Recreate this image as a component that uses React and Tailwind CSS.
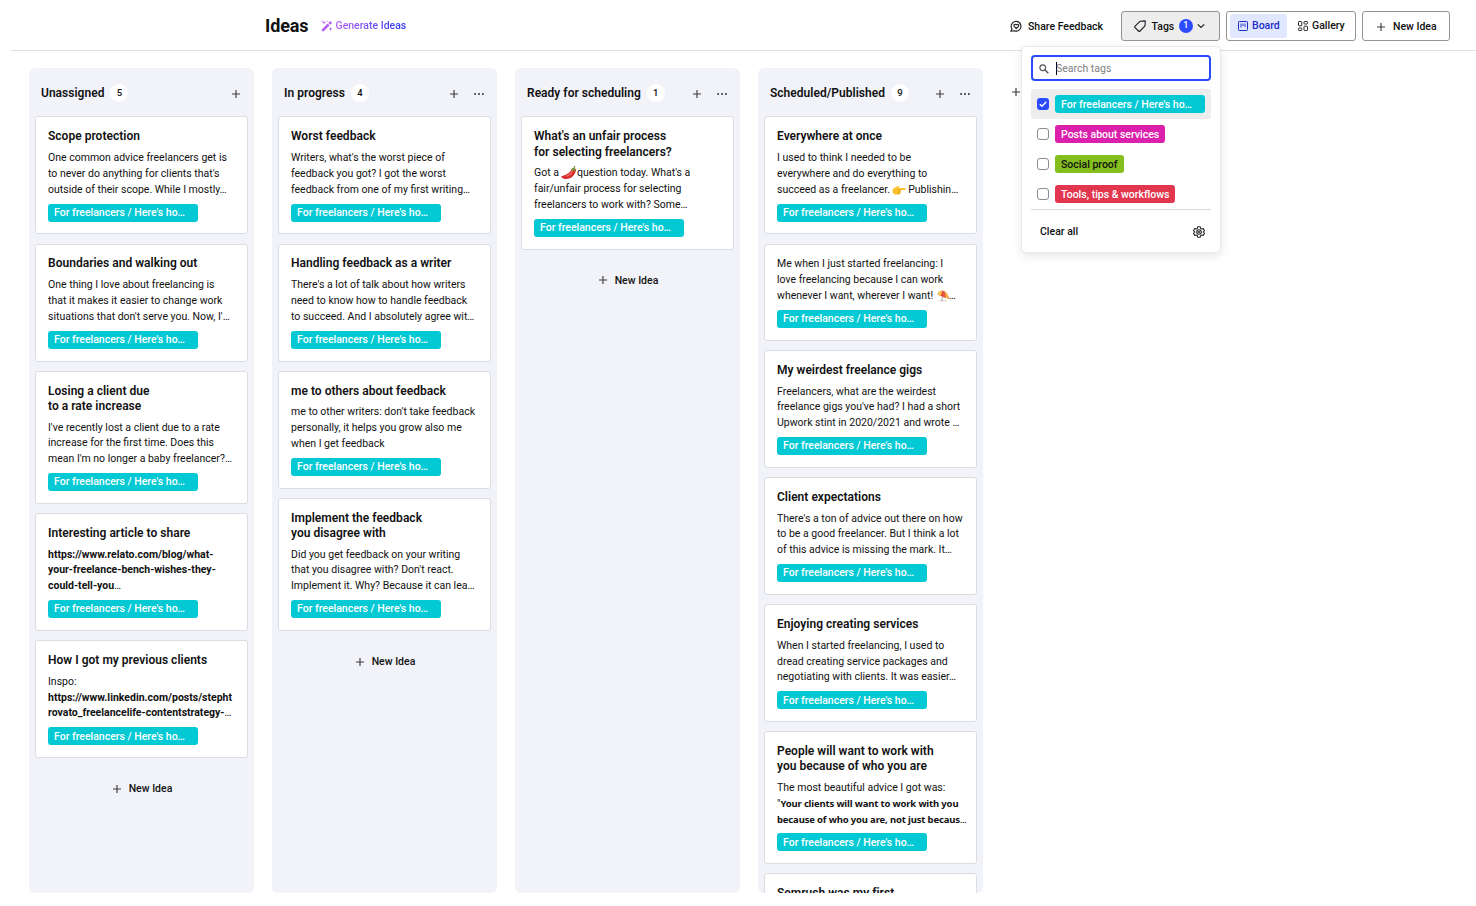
import React from "react";

const TAG = "For freelancers / Here's ho…";

const Chili = () => (
  <svg viewBox="0 0 14 14" className="-ml-px -mr-px inline-block h-[15px] w-[15px] align-[-4px]">
    <path d="M10.400 3C9.200 6.500 5.600 9.200.6 10.400c-.5.500-.3 1.100.3 1.500 2.900 1.900 7.300 1.300 10.200-1.500 2.200-2.100 3.100-4.700 2.700-7Z" fill="#d92b2b" />
    <path d="M10.800 5.300C9.800 7.800 7.400 9.700 4.700 10.600" stroke="#f77f72" strokeWidth="1" fill="none" />
    <path d="M9.500 4.600c.2-1.700 2.900-2.200 4.200-.4l-.1 1.500-1.500-.7-1.300.6Z" fill="#6b9a34" />
    <path d="M12 3.400c.1-1 .4-1.700 1.200-2.400" stroke="#6b9a34" strokeWidth="1.100" fill="none" />
  </svg>
);

const Pointing = () => (
  <svg viewBox="0 0 14 12" className="-ml-px inline-block h-[12px] w-[14px] align-[-3px]">
    <path d="M.5 6.500C1 4.500 2.500 3.500 4.200 2.900l2-1c1-.3 1.500.6.8 1.300l-.8.8h6.600c1.200 0 1.200 1.900 0 1.900H8.600c.8.5.8 1.500 0 1.800.5.600.2 1.500-.5 1.600 0 .9-.6 1.300-1.400 1.300H3.200C1.700 10.600.3 8.600.5 6.500Z" fill="#fcc12d" />
    <path d="M5.800 6h2.800M5.800 7.800h2.600M5.600 9.400h2.300" stroke="#dc8d18" strokeWidth=".5" />
  </svg>
);

const Umbrella = () => (
  <svg viewBox="0 0 13 13" className="-mr-px inline-block h-[13px] w-[14px] align-[-3px]">
    <path d="M2 12.200c2-1.500 7-1.500 9 0Z" fill="#d5cfc4" />
    <path d="M7 6 5 12" stroke="#9aa0a8" strokeWidth=".8" />
    <path d="M1 5.500C3 .3 9.500-.5 12.600 9.800 9 9 4.500 7 1 5.500Z" fill="#e23b3b" />
    <path d="M1 5.500C2 3 4 1.700 6 1.600L4.300 7Z" fill="#f6c54a" />
    <path d="M6 1.600C8.500 2.600 9.300 5.500 9 8.800L6.600 7.900Z" fill="#ee5a45" />
    <path d="M9 8.800c.2-2.500-.2-4.800-1.400-6.900 2.500 1 4.300 3.800 5 7.900Z" fill="#f3b548" />
  </svg>
);

const Plus = () => (
  <svg viewBox="0 0 10 10" className="h-[10px] w-[10px] shrink-0">
    <path d="M5 1v8M1 5h8" stroke="#3d3d3d" strokeWidth="1.150" fill="none" />
  </svg>
);

const B = ({ children }) => <b className="font-bold">{children}</b>;
const M = ({ children }) => (
  <b className="font-['Noto_Sans',sans-serif] text-[9.500px] font-bold tracking-[-0.16px]">{children}</b>
);

const columns = [
  {
    name: "Unassigned",
    count: 5,
    cards: [
      { title: ["Scope protection"], body: ["One common advice freelancers get is", "to never do anything for clients that's", "outside of their scope. While I mostly…"] },
      { title: ["Boundaries and walking out"], body: ["One thing I love about freelancing is", "that it makes it easier to change work", "situations that don't serve you. Now, I'…"] },
      { title: ["Losing a client due", "to a rate increase"], body: ["I've recently lost a client due to a rate", "increase for the first time. Does this", "mean I'm no longer a baby freelancer?…"] },
      {
        title: ["Interesting article to share"],
        body: [<B>https://www.relato.com/blog/what-</B>, <B>your-freelance-bench-wishes-they-</B>, <><B>could-tell-you</B>…</>],
      },
      {
        title: ["How I got my previous clients"],
        body: ["Inspo:", <B>https://www.linkedin.com/posts/stepht</B>, <><B>rovato_freelancelife-contentstrategy-</B>…</>],
      },
    ],
  },
  {
    name: "In progress",
    count: 4,
    menu: true,
    cards: [
      { title: ["Worst feedback"], body: ["Writers, what's the worst piece of", "feedback you got? I got the worst", "feedback from one of my first writing…"] },
      { title: ["Handling feedback as a writer"], body: ["There's a lot of talk about how writers", "need to know how to handle feedback", "to succeed. And I absolutely agree wit…"] },
      { title: ["me to others about feedback"], body: ["me to other writers: don't take feedback", "personally, it helps you grow also me", "when I get feedback"] },
      { title: ["Implement the feedback", "you disagree with"], body: ["Did you get feedback on your writing", "that you disagree with? Don't react.", "Implement it. Why? Because it can lea…"] },
    ],
  },
  {
    name: "Ready for scheduling",
    count: 1,
    menu: true,
    cards: [
      {
        title: ["What's an unfair process", "for selecting freelancers?"],
        body: [<>Got a <Chili /> question today. What's a</>, "fair/unfair process for selecting", "freelancers to work with? Some…"],
      },
    ],
  },
  {
    name: "Scheduled/Published",
    count: 9,
    menu: true,
    cards: [
      { title: ["Everywhere at once"], body: ["I used to think I needed to be", "everywhere and do everything to", <>succeed as a freelancer. <Pointing /> Publishin…</>] },
      { title: [], body: ["Me when I just started freelancing: I", "love freelancing because I can work", <>whenever I want, wherever I want! <Umbrella />…</>] },
      { title: ["My weirdest freelance gigs"], body: ["Freelancers, what are the weirdest", "freelance gigs you've had? I had a short", "Upwork stint in 2020/2021 and wrote …"] },
      { title: ["Client expectations"], body: ["There's a ton of advice out there on how", "to be a good freelancer. But I think a lot", "of this advice is missing the mark. It…"] },
      { title: ["Enjoying creating services"], body: ["When I started freelancing, I used to", "dread creating service packages and", "negotiating with clients. It was easier…"] },
      {
        title: ["People will want to work with", "you because of who you are"],
        body: ["The most beautiful advice I got was:", <>"<M>Your clients will want to work with you</M></>, <><M>because of who you are, not just becaus</M>…</>],
      },
      { title: ["Semrush was my first"], body: [] },
    ],
  },
];

const Tag = ({ children, className = "bg-[#02c9d3] text-white w-[150px]" }) => (
  <span className={`flex h-[18px] items-center whitespace-nowrap rounded-[3px] px-[6px] pt-[0.500px] text-[10.500px] font-medium ${className}`}>
    {children}
  </span>
);

const Card = ({ title, body }) => (
  <article className="shrink-0 rounded-[3px] border border-[#dcdde2] bg-white px-[12px] pb-[11.900px] pt-[11.950px]">
    {title.length > 0 ? (
      <h3 className="mb-[5.600px] whitespace-nowrap text-[12px] font-semibold leading-[15.200px] tracking-[0.02px]">
        {title.map((t) => <div key={t}>{t}</div>)}
      </h3>
    ) : null}
    <div className="mb-[6px] whitespace-nowrap text-[10.500px]">
      {body.map((l, i) => <div key={i} className="h-[15.800px] leading-[15.800px]">{l}</div>)}
    </div>
    {body.length > 0 && <Tag>{TAG}</Tag>}
  </article>
);

const Column = ({ name, count, menu, cards }) => (
  <section className="flex h-[825px] w-[225px] shrink-0 flex-col overflow-hidden rounded-[6px] bg-[#f2f3f9] px-[6px]">
    <header className="flex h-[48.400px] shrink-0 items-center pl-[6px] pr-[7px] pt-[3px]">
      <h2 className="whitespace-nowrap pb-[1.500px] text-[12px] font-semibold tracking-[0.02px]">{name}</h2>
      <span className="mb-px ml-[6px] flex h-[18px] w-[18px] items-center justify-center rounded-full bg-white text-[9.500px] font-medium">{count}</span>
      <span className="ml-auto flex items-center gap-[15px]">
        <Plus />
        {menu && (
          <svg viewBox="0 0 10 4" className="h-[4px] w-[10px]">
            <circle cx="1.100" cy="2" r=".9" fill="#222" /><circle cx="5" cy="2" r=".9" fill="#222" /><circle cx="8.900" cy="2" r=".9" fill="#222" />
          </svg>
        )}
      </span>
    </header>
    <div className="flex flex-col gap-[9.100px]">
      {cards.map((c, i) => <Card key={i} {...c} />)}
    </div>
    <button className="mt-[21.800px] flex h-[18px] shrink-0 items-center justify-center gap-[7px] pl-px text-[10.500px] font-medium">
      <Plus />New Idea
    </button>
  </section>
);

const filters = [
  { label: TAG, on: true, cls: "bg-[#02c9d3] text-white w-[150px]" },
  { label: "Posts about services", cls: "bg-[#db20ac] text-white w-[110px]" },
  { label: "Social proof", cls: "bg-[#84bf1d] text-[#111] w-[69px]" },
  { label: "Tools, tips & workflows", cls: "bg-[#e2364f] text-white w-[120px]" },
];

const TagMenu = () => (
  <div className="absolute right-[-2px] top-[34px] z-10 h-[207px] w-[200px] rounded-[5px] border border-[#e9e9e9] bg-white px-[9px] pt-[8px] shadow-[0_3px_10px_rgba(0,0,0,0.1)]">
    <div className="flex h-[26px] items-center rounded-[4px] border-2 border-[#2c4bff] pl-[6px] pt-px">
      <svg viewBox="0 0 12 12" className="h-[10px] w-[10px]" fill="none" stroke="#555">
        <circle cx="4.500" cy="4.500" r="3.400" strokeWidth="1.400" /><path d="m7 7 4.200 4.200" strokeWidth="1.700" />
      </svg>
      <span className="ml-[7px] h-[13px] w-px bg-black" />
      <span className="-ml-px pt-px text-[10.500px] font-normal text-[#808080]">Search tags</span>
    </div>
    <div className="mt-[8px] border-b border-[#dcdcdc]">
      {filters.map((f) => (
        <div key={f.label} className={`flex h-[30px] items-center gap-[6px] rounded-[3px] pl-[6px] ${f.on ? "bg-[#ededed]" : ""}`}>
          {f.on ? (
            <span className="flex h-[12px] w-[12px] items-center justify-center rounded-[3px] bg-[#2c4bff]">
              <svg viewBox="0 0 10 10" className="h-[10px] w-[10px]"><path d="m1.800 5.200 2.200 2.100L8.300 2.800" stroke="#fff" strokeWidth="1.400" fill="none" /></svg>
            </span>
          ) : (
            <span className="h-[12px] w-[12px] rounded-[3px] border border-[#8c8c8c] bg-white" />
          )}
          <Tag className={f.cls}><span className="pt-[0.500px]">{f.label}</span></Tag>
        </div>
      ))}
    </div>
    <div className="flex h-[43px] items-center justify-between pl-[9px] pr-[6px]">
      <span>Clear all</span>
      <svg viewBox="0 0 24 24" className="h-[12px] w-[12px]" fill="none" stroke="#222" strokeWidth="2.200" strokeLinejoin="round">
        <path d="M9.500 1.500h5l.7 3.200 2.200 1.300 3.200-1 2.400 4.300L20.500 12l2.500 2.700-2.400 4.300-3.200-1-2.200 1.300-.7 3.200h-5l-.7-3.200L6.600 18l-3.200 1L1 14.700 3.500 12 1 9.300 3.400 5l3.200 1 2.200-1.300Z" />
        <circle cx="12" cy="12" r="4.500" /><circle cx="12" cy="12" r="1" />
      </svg>
    </div>
  </div>
);

export default function App() {
  return (
    <div className="flex h-[906px] w-[1476px] flex-col overflow-hidden bg-white font-[Roboto,sans-serif] text-[#111]">
      <header className="ml-[11px] flex h-[51px] shrink-0 items-center border-b border-[#dedede] pl-[254px] pr-[26px] pt-[2px] text-[10.500px] font-medium">
        <h1 className="pb-[2px] text-[18px] font-bold tracking-[-0.1px]">Ideas</h1>
        <button className="ml-[12px] flex items-center gap-[3px] whitespace-nowrap">
          <svg viewBox="0 0 12 12" className="h-[12px] w-[12px]" fill="#b35cf5">
            <path d="m.8 9.500 5.900-5.900 1.800 1.800L2.600 11.300c-.8.600-2.400-1-1.800-1.800Z" />
            <path d="m7.300 3 1.500-1.500c.8-.7 2.500 1 1.800 1.800L9.100 4.800Z" />
            <path d="m3 .5.500 1.500L5 2.500 3.500 3 3 4.500 2.500 3 1 2.500 2.500 2ZM9.500 7l.5 1.500 1.500.5-1.500.5-.5 1.500-.5-1.500-1.500-.5L9 8.500ZM1 .2l.3.600.6.300-.6.300L1 2 .7 1.400.1 1.100.7.800ZM6 .3l.3.600.6.300-.6.300-.3.600-.3-.6-.6-.3.600-.3Z" />
          </svg>
          <span className="bg-gradient-to-r from-[#b35cf5] to-[#2333f5] bg-clip-text text-transparent">Generate Ideas</span>
        </button>
        <div className="ml-auto flex items-center">
          <button className="mr-[18px] flex items-center gap-[6px] whitespace-nowrap">
            <svg viewBox="0 0 12 12" className="h-[12px] w-[12px]" fill="none" stroke="#222" strokeWidth="1.150" strokeLinejoin="round">
              <path d="M2 9A4.900 4.900 0 1 1 4 10.700L.9 11.300Z" />
              <path d="M6.300 8.500 4.200 6.300c-1-1.400.9-2.900 2.100-1.400 1.200-1.500 3.100 0 2.100 1.400Z" />
            </svg>
            <span className="pt-px">Share Feedback</span>
          </button>
          <div className="relative mr-[6px] flex h-[30px] w-[99px] items-center rounded-[3px] border border-[#949494] bg-[#ededed] pl-[12px]">
            <svg viewBox="0 0 12 12" className="h-[12px] w-[12px]" fill="none" stroke="#222" strokeWidth="1.150" strokeLinejoin="round">
              <path d="M6.200 1.200 10.700.9c.4 0 .6.200.6.600l-.3 4.300-5 5.200c-.5.500-1 .5-1.500 0L1.100 7.700c-.5-.5-.5-1 0-1.500Z" />
            </svg>
            <span className="ml-[5.500px] pt-px">Tags</span>
            <span className="ml-[4.500px] flex h-[14px] w-[14px] items-center justify-center rounded-full bg-[#2c4bff] text-[9px] text-white">1</span>
            <svg viewBox="0 0 8 8" className="ml-[4px] h-[8px] w-[8px]" fill="none" stroke="#222" strokeWidth="1.200"><path d="m.8 2.300 3.200 3.200 3.200-3.200" /></svg>
            <TagMenu />
          </div>
          <div className="mr-[6px] flex h-[30px] w-[130px] items-center rounded-[3px] border border-[#949494] pl-[3px]">
            <span className="flex h-[24px] w-[57px] items-center gap-[4px] rounded-[3px] bg-[#e0e7ff] pl-[8px] text-[#1b2bc4]">
              <svg viewBox="0 0 10 10" className="h-[10px] w-[10px] shrink-0" fill="none" stroke="currentColor">
                <rect x=".5" y=".5" width="9" height="9" rx=".8" /><path d="M3 2.500v4M5 2.500v2.500M7 2.500v3.500" strokeWidth=".9" />
              </svg>
              Board
            </span>
            <span className="ml-[11px] flex items-center gap-[4px]">
              <svg viewBox="0 0 10 10" className="h-[10px] w-[10px] shrink-0" fill="none" stroke="#222">
                <rect x=".5" y=".5" width="3.300" height="4.300" rx=".7" /><rect x="6" y=".5" width="3.500" height="2.500" rx=".7" /><rect x=".5" y="7" width="3.300" height="2.500" rx=".7" /><rect x="6" y="5.200" width="3.500" height="4.300" rx=".7" />
              </svg>
              Gallery
            </span>
          </div>
          <button className="flex h-[30px] w-[88px] items-center gap-[7px] whitespace-nowrap rounded-[3px] border border-[#949494] pl-[13px] pt-px">
            <Plus />New Idea
          </button>
        </div>
      </header>
      <main className="flex gap-[18px] pl-[29px] pt-[17px]">
        {columns.map((c) => <Column key={c.name} {...c} />)}
        <div className="ml-[10px] pt-[19px]"><Plus /></div>
      </main>
    </div>
  );
}
